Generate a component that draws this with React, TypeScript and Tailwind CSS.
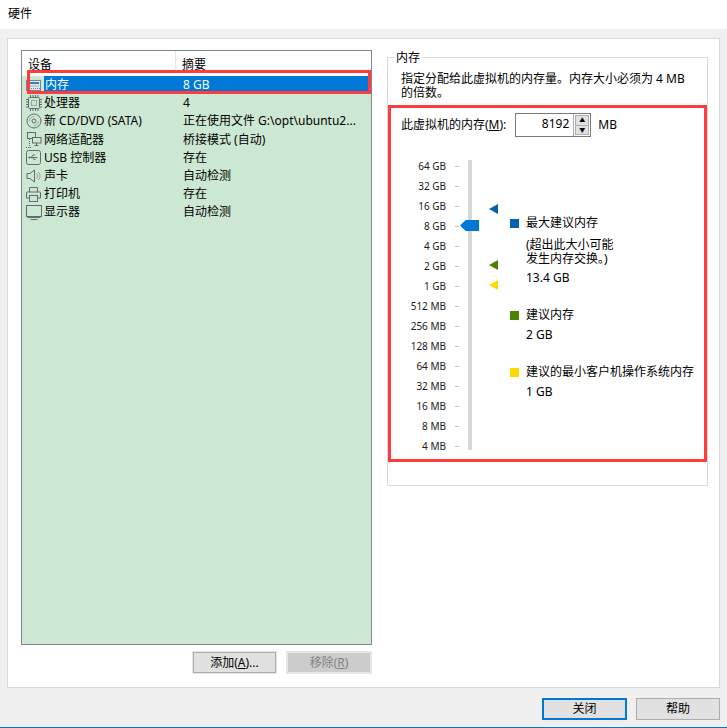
import type { ReactNode } from "react";

const FONT = "font-['Noto_Sans','Noto_Sans_CJK_SC',sans-serif]";

const ICON_COLOR = "#5f6b70";

const MemoryIcon = () => (
  <svg width="15" height="11" viewBox="0 0 15 11" className="block">
    <rect x="0.5" y="0.5" width="14" height="10" fill="#dfe8ea" stroke="#6f8796" />
    <rect x="2" y="2" width="11" height="2" fill="#3e7fae" />
    <path d="M2 6h11" stroke="#9ab4c4" />
    <path d="M1 8.5h13" stroke="#6f8796" strokeDasharray="1 1" />
  </svg>
);

const CpuIcon = () => (
  <svg width="16" height="16" viewBox="0 0 16 16" fill="none" stroke={ICON_COLOR} className="block">
    <rect x="2.5" y="2.5" width="11" height="11" rx="1" />
    <rect x="5.5" y="5.5" width="5" height="5" stroke="#9aa3a6" />
    <path d="M4.5 0v2M7 0v2M9.5 0v2M12 0v2M4.5 14v2M7 14v2M9.5 14v2M12 14v2M0 4.5h2M0 7h2M0 9.5h2M0 12h2M14 4.5h2M14 7h2M14 9.5h2M14 12h2" />
  </svg>
);

const DiscIcon = () => (
  <svg width="16" height="16" viewBox="0 0 16 16" fill="none" stroke={ICON_COLOR} className="block">
    <circle cx="8" cy="8" r="7" />
    <circle cx="8" cy="8" r="2" />
    <path d="M3.5 8A4.5 4.5 0 0 1 8 3.5M12.5 8A4.5 4.5 0 0 1 8 12.5" stroke="#9aa3a6" />
  </svg>
);

const NetworkIcon = () => (
  <svg width="16" height="16" viewBox="0 0 16 16" fill="none" stroke={ICON_COLOR} className="block">
    <rect x="1.5" y="0.5" width="8" height="6" />
    <rect x="6.5" y="5.5" width="8.5" height="5.5" fill="#cde8d2" />
    <path d="M10.5 11v2M8.5 13.5h4" />
    <path d="M3.5 7v8.5M0 15.5h6" strokeDasharray="1 1" />
  </svg>
);

const UsbIcon = () => (
  <svg width="15" height="15" viewBox="0 0 15 15" fill="none" stroke={ICON_COLOR} className="block">
    <rect x="0.5" y="0.5" width="14" height="14" rx="2" />
    <path d="M3 7.5h8.5M5 7.5l2-2.5h2M6.5 7.5l1.5 2h1.5" />
    <path d="M3.5 6.5L2.5 7.5l1 1" />
  </svg>
);

const SpeakerIcon = () => (
  <svg width="15" height="14" viewBox="0 0 15 14" fill="none" stroke={ICON_COLOR} className="block">
    <path d="M1 4.5h3L8.5 1v12L4 9.5H1z" />
    <path d="M10.5 4.5a3.5 3.5 0 0 1 0 5M12.5 3a6 6 0 0 1 0 8" stroke="#9aa3a6" />
  </svg>
);

const PrinterIcon = () => (
  <svg width="15" height="15" viewBox="0 0 15 15" fill="none" stroke={ICON_COLOR} className="block">
    <path d="M3.5 5V0.5h8V5" />
    <path d="M3.5 11h-3V5.5a.5.5 0 0 1 .5-.5h13a.5.5 0 0 1 .5.5V11h-3" />
    <rect x="3.5" y="8.5" width="8" height="6" />
  </svg>
);

const MonitorIcon = () => (
  <svg width="16" height="15" viewBox="0 0 16 15" fill="none" stroke={ICON_COLOR} className="block">
    <rect x="0.5" y="0.5" width="15" height="11" />
    <path d="M1.5 12.5h13M4.5 14.5h7" />
  </svg>
);

const devices: { icon: ReactNode; name: string; summary: string; selected?: boolean }[] = [
  { icon: <MemoryIcon />, name: "内存", summary: "8 GB", selected: true },
  { icon: <CpuIcon />, name: "处理器", summary: "4" },
  { icon: <DiscIcon />, name: "新 CD/DVD (SATA)", summary: "正在使用文件 G:\\opt\\ubuntu2..." },
  { icon: <NetworkIcon />, name: "网络适配器", summary: "桥接模式 (自动)" },
  { icon: <UsbIcon />, name: "USB 控制器", summary: "存在" },
  { icon: <SpeakerIcon />, name: "声卡", summary: "自动检测" },
  { icon: <PrinterIcon />, name: "打印机", summary: "存在" },
  { icon: <MonitorIcon />, name: "显示器", summary: "自动检测" },
];

const sizes = [
  "64 GB", "32 GB", "16 GB", "8 GB", "4 GB", "2 GB", "1 GB", "512 MB", "256 MB",
  "128 MB", "64 MB", "32 MB", "16 MB", "8 MB", "4 MB",
];

const Marker = ({ className }: { className: string }) => (
  <div className={`absolute left-[21px] h-0 w-0 border-y-[5px] border-r-[9px] border-y-transparent ${className}`} />
);

const LegendTitle = ({ color, children }: { color: string; children: ReactNode }) => (
  <div className="flex h-[18px] items-center">
    <div className={`mr-[7px] h-[9px] w-[9px] ${color}`} />
    <span>{children}</span>
  </div>
);

export default function App() {
  return (
    <div className={`flex h-[728px] w-[727px] flex-col overflow-hidden border-b border-[#0078d7] bg-[#f0f0f0] text-[12px] leading-[18px] text-black ${FONT}`}>
      <div className="flex h-[29px] items-center bg-white pb-px pl-2">硬件</div>

      <div className="mt-[9px] ml-[7px] flex h-[650px] w-[713px] gap-[15px] border border-[#d9d9d9] bg-white pt-[11px] pl-[13px]">
        {/* device list */}
        <div className="flex w-[351px] flex-col">
          <div className="relative h-[595px] border border-[#828790] bg-[#cde8d2]">
            <div className="flex h-[18px] bg-white leading-[28px]">
              <div className="w-[154px] border-r border-[#e5e5e5] pl-[6px]">设备</div>
              <div className="pl-[6px]">摘要</div>
            </div>
            <div className="h-[7px] bg-white" />
            {devices.map((d) => (
              <div key={d.name} className="flex h-[18.2px] items-center">
                <div className="flex w-[22px] shrink-0 justify-center pl-[1px]">{d.icon}</div>
                {d.selected ? (
                  <div className="flex h-[18px] w-[326px] items-center bg-[#0078d7] text-white">
                    <span className="w-[139px] pl-[1px]">{d.name}</span>
                    <span>{d.summary}</span>
                  </div>
                ) : (
                  <>
                    <span className="w-[139px] whitespace-nowrap">{d.name}</span>
                    <span className="whitespace-nowrap">{d.summary}</span>
                  </>
                )}
              </div>
            ))}
            {/* red highlight drawn over the selected row */}
            <div className="absolute top-[19px] left-[5px] h-[24px] w-[344px] border-[3px] border-[#ff3b3b]" />
          </div>
          <div className="mt-[6px] flex justify-end gap-[9px]">
            <button className="h-[23px] w-[85px] border-2 border-[#e6e6e6] bg-[#e1e1e1] outline-1 -outline-offset-2 outline-[#adadad]">
              添加(<span className="underline">A</span>)...
            </button>
            <button className="h-[23px] w-[86px] border-2 border-[#e6e6e6] bg-[#cccccc] text-[#838383]">
              移除(<span className="underline">R</span>)
            </button>
          </div>
        </div>

        {/* memory group */}
        <div className="relative mt-[7px] h-[429px] w-[321px] border border-[#d9d9d9]">
          <div className="absolute -top-[9px] left-[6px] bg-white px-[2px]">内存</div>
          <div className="pt-[14px] pl-[13px] leading-[14px]">
            指定分配给此虚拟机的内存量。内存大小必须为 4 MB
            <br />
            的倍数。
          </div>
          <div className="mt-[5px] h-[357px] w-[319px] border-[3px] border-[#ff3b3b] pt-[5px] pl-[10px]">
            <div className="flex items-center">
              <span>
                此虚拟机的内存(<span className="underline">M</span>):
              </span>
              <div className="ml-[9px] flex h-[24px] w-[76px] border border-[#7a7a7a]">
                <div className="flex-1 pr-[4px] pb-[3px] text-right leading-[20px]">8192</div>
                <div className="flex w-[17px] flex-col border-l border-[#adadad] bg-white p-px">
                  <div className="flex flex-1 items-center justify-center border border-[#adadad] bg-[#e1e1e1] text-[6px] leading-none">▲</div>
                  <div className="-mt-px flex flex-1 items-center justify-center border border-[#adadad] bg-[#e1e1e1] text-[6px] leading-none">▼</div>
                </div>
              </div>
              <span className="ml-[7px]">MB</span>
            </div>

            <div className="mt-[19px] flex">
              {/* scale */}
              <div className="w-[45px] text-right text-[10px] leading-[20px] text-[#1a1a1a]">
                {sizes.map((s) => (
                  <div key={s} className="h-[20px] whitespace-nowrap">
                    {s}
                  </div>
                ))}
              </div>
              <div className="ml-[9px] flex w-[4px] flex-col">
                {sizes.map((s) => (
                  <div key={s} className="flex h-[20px] items-center">
                    <div className="h-px w-[4px] bg-[#c4c4c4]" />
                  </div>
                ))}
              </div>
              {/* slider */}
              <div className="relative ml-[9px] w-[20px]">
                <div className="mt-[4px] h-[290px] w-[4px] bg-[#d6d8d7]" />
                <div className="absolute top-[64px] left-[-8px] h-[11px] w-[19px] bg-[#0078d7] [clip-path:polygon(0_50%,30%_0,100%_0,100%_100%,30%_100%)]" />
                <Marker className="top-[48px] border-r-[#0063b1]" />
                <Marker className="top-[104px] border-r-[#498205]" />
                <Marker className="top-[124px] border-r-[#ffd800]" />
              </div>
              {/* legend */}
              <div className="ml-[22px] w-[190px] whitespace-nowrap">
                <div className="mt-[58px]">
                  <LegendTitle color="bg-[#0063b1]">最大建议内存</LegendTitle>
                </div>
                <div className="mt-[6px] pl-[16px] leading-[14px]">
                  (超出此大小可能
                  <br />
                  发生内存交换。)
                </div>
                <div className="mt-[3px] pl-[16px]">13.4 GB</div>
                <div className="mt-[19px]">
                  <LegendTitle color="bg-[#498205]">建议内存</LegendTitle>
                </div>
                <div className="mt-[2px] pl-[16px]">2 GB</div>
                <div className="mt-[19px]">
                  <LegendTitle color="bg-[#ffd800]">建议的最小客户机操作系统内存</LegendTitle>
                </div>
                <div className="mt-[2px] pl-[16px]">1 GB</div>
              </div>
            </div>
          </div>
        </div>
      </div>

      <div className="mt-[10px] flex justify-end gap-[9px] pr-[7px]">
        <button className="h-[22px] w-[85px] border-2 border-[#0078d7] bg-[#e1e1e1]">关闭</button>
        <button className="h-[22px] w-[84px] border border-[#adadad] bg-[#e1e1e1]">帮助</button>
      </div>
    </div>
  );
}
